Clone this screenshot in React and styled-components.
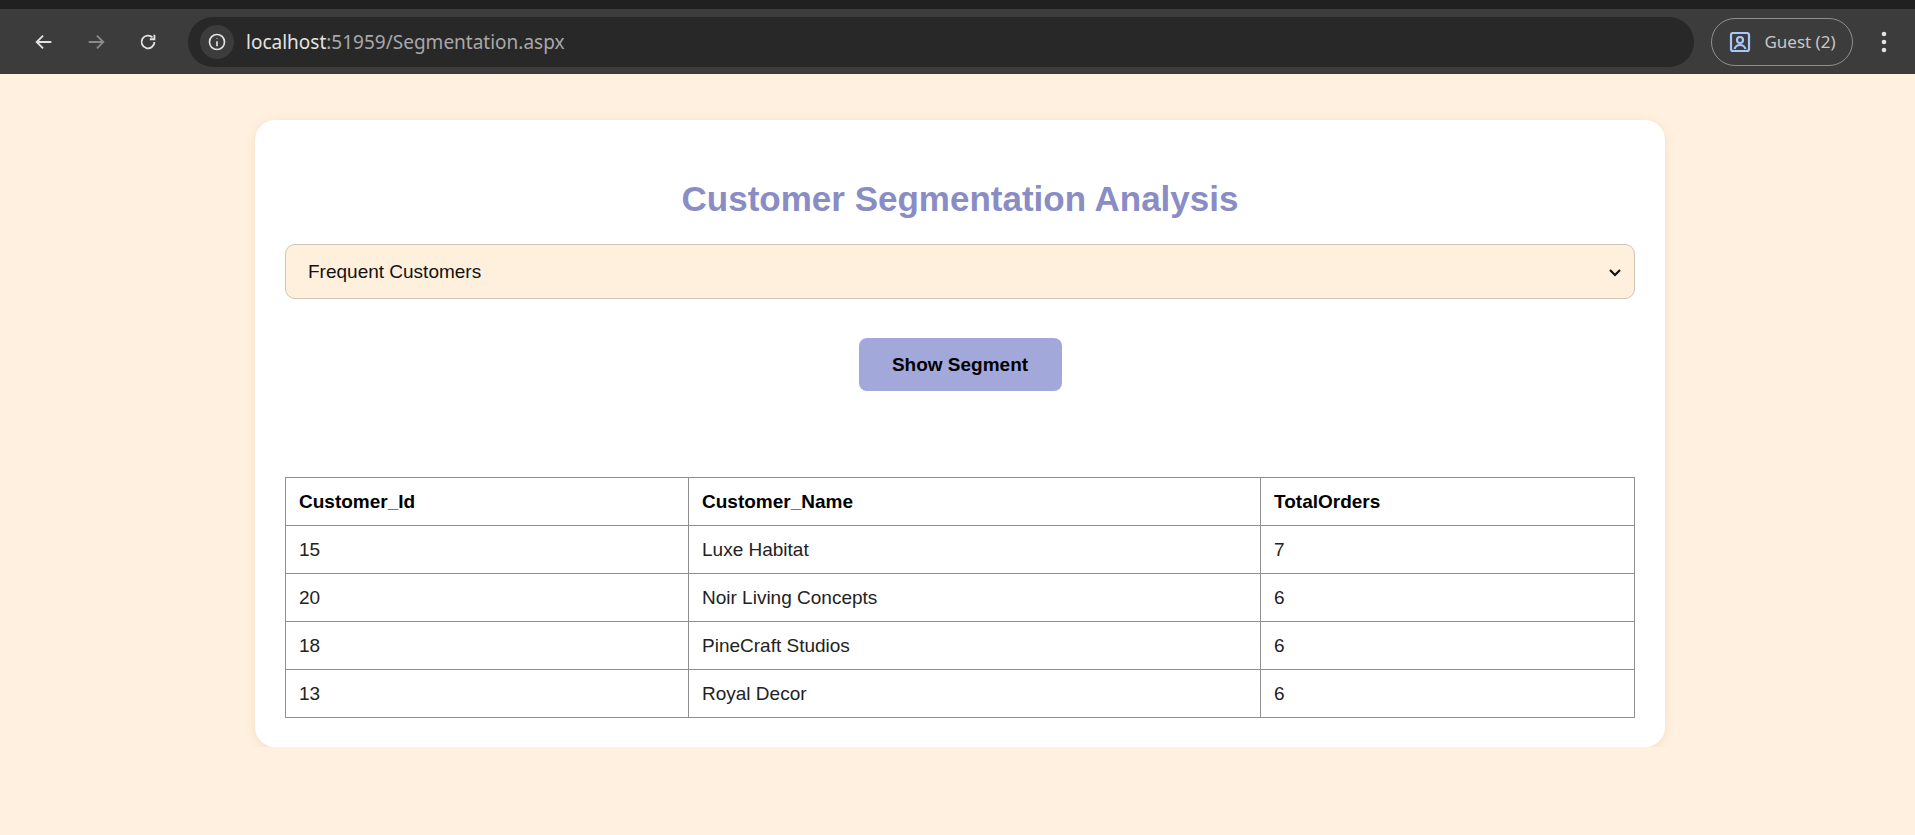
import React from "react";
import styled, { createGlobalStyle } from "styled-components";

const Global = createGlobalStyle`
  html, body { margin: 0; padding: 0; }
  body { background: #fff0df; font-family: "Liberation Sans", Arial, sans-serif; }
`;

const Chrome = styled.div`
  height: 74px; background: #3c3c3c; border-top: 9px solid #202020; box-sizing: border-box;
  display: flex; align-items: center; padding: 0 0 0 18px; gap: 0;
`;
const NavBtn = styled.div`
  width: 52px; height: 40px; display: flex; align-items: center; justify-content: center;
  color: ${p => (p.dim ? "#8a8a8a" : "#e3e3e3")};
`;
const Omnibox = styled.div`
  margin-left: 14px; flex: 1; height: 50px; border-radius: 25px; background: #282828;
  display: flex; align-items: center; padding-left: 12px; gap: 12px;
  font-family: "Noto Sans", "Open Sans", sans-serif; font-size: 19px; color: #e3e3e3;
`;
const InfoDot = styled.div`
  width: 34px; height: 34px; border-radius: 50%; background: #3c3c3c;
  display: flex; align-items: center; justify-content: center;
`;
const Dim = styled.span` color: #a8a8a8; `;
const Guest = styled.div`
  margin-left: 17px; width: 142px; height: 48px; box-sizing: border-box; border: 1.5px solid #8f8f8f;
  border-radius: 24px; display: flex; align-items: center; justify-content: center; gap: 12px;
  font-family: "Noto Sans", sans-serif; font-size: 17px; color: #c7c7c7;
`;
const Menu = styled.div` width: 62px; display: flex; justify-content: center; `;

const Page = styled.div` padding: 46px 250px 0 255px; `;
const Card = styled.div`
  width: 1410px; box-sizing: border-box; background: #fff; border-radius: 20px;
  padding: 58px 30px 29px; box-shadow: 0 2px 10px rgba(200,170,120,0.25);
`;
const Title = styled.h2`
  margin: 0 0 24px; text-align: center; color: #8a8cc4; font-size: 35px; font-weight: bold; line-height: 42px;
`;
const Select = styled.div`
  height: 55px; box-sizing: border-box; border: 1px solid #cfc6b8; border-radius: 10px; background: #fff0de;
  display: flex; align-items: center; justify-content: space-between; padding: 0 12px 0 22px;
  font-size: 19px; color: #111;
`;
const BtnRow = styled.div` display: flex; justify-content: center; margin: 39px 0 86px; `;
const Button = styled.div`
  width: 203px; height: 53px; border-radius: 8px; background: #a3a8db;
  display: flex; align-items: center; justify-content: center; font-weight: bold; font-size: 19px; color: #000;
`;
const Table = styled.table`
  width: 100%; border-collapse: collapse; font-size: 19px;
  th, td { border: 1px solid #8f8f8f; height: 48px; padding: 0 13px; text-align: left; box-sizing: border-box; }
  th { font-weight: bold; color: #000; }
  td { color: #222; }
`;

const rows = [["15","Luxe Habitat","7"],["20","Noir Living Concepts","6"],["18","PineCraft Studios","6"],["13","Royal Decor","6"]];

export default function App() {
  return (
    <>
      <Global />
      <Chrome>
        <NavBtn><svg width="22" height="22" viewBox="0 0 24 24" fill="none" stroke="currentColor" strokeWidth="2"><path d="M20 12H5M11 5l-7 7 7 7"/></svg></NavBtn>
        <NavBtn dim><svg width="22" height="22" viewBox="0 0 24 24" fill="none" stroke="currentColor" strokeWidth="2"><path d="M4 12h15M13 5l7 7-7 7"/></svg></NavBtn>
        <NavBtn><svg width="22" height="22" viewBox="0 0 24 24" fill="none" stroke="currentColor" strokeWidth="2"><path d="M19 12a7 7 0 1 1-2.05-4.95"/><path d="M19 4v5h-5"/></svg></NavBtn>
        <Omnibox>
          <InfoDot><svg width="20" height="20" viewBox="0 0 24 24" fill="none" stroke="#e3e3e3" strokeWidth="2"><circle cx="12" cy="12" r="9"/><path d="M12 11v6M12 7.5v.5"/></svg></InfoDot>
          <span>localhost<Dim>:51959/Segmentation.aspx</Dim></span>
        </Omnibox>
        <Guest>
          <svg width="24" height="24" viewBox="0 0 24 24" fill="none" stroke="#a8c7fa" strokeWidth="2.2"><rect x="3" y="3" width="18" height="18" rx="2"/><circle cx="12" cy="10" r="3"/><path d="M6.5 19c1-3 3-4 5.5-4s4.5 1 5.5 4"/></svg>
          Guest (2)
        </Guest>
        <Menu><svg width="6" height="22" viewBox="0 0 6 22" fill="#e3e3e3"><circle cx="3" cy="3" r="2.3"/><circle cx="3" cy="11" r="2.3"/><circle cx="3" cy="19" r="2.3"/></svg></Menu>
      </Chrome>
      <Page>
        <Card>
          <Title>Customer Segmentation Analysis</Title>
          <Select>
            <span>Frequent Customers</span>
            <svg width="14" height="14" viewBox="0 0 14 14" fill="none" stroke="#111" strokeWidth="2.2"><path d="M2 5l5 5 5-5"/></svg>
          </Select>
          <BtnRow><Button>Show Segment</Button></BtnRow>
          <Table>
            <colgroup><col style={{ width: 403 }} /><col style={{ width: 572 }} /><col /></colgroup>
            <thead><tr><th>Customer_Id</th><th>Customer_Name</th><th>TotalOrders</th></tr></thead>
            <tbody>{rows.map(r => <tr key={r[0]}>{r.map((c, i) => <td key={i}>{c}</td>)}</tr>)}</tbody>
          </Table>
        </Card>
      </Page>
    </>
  );
}
